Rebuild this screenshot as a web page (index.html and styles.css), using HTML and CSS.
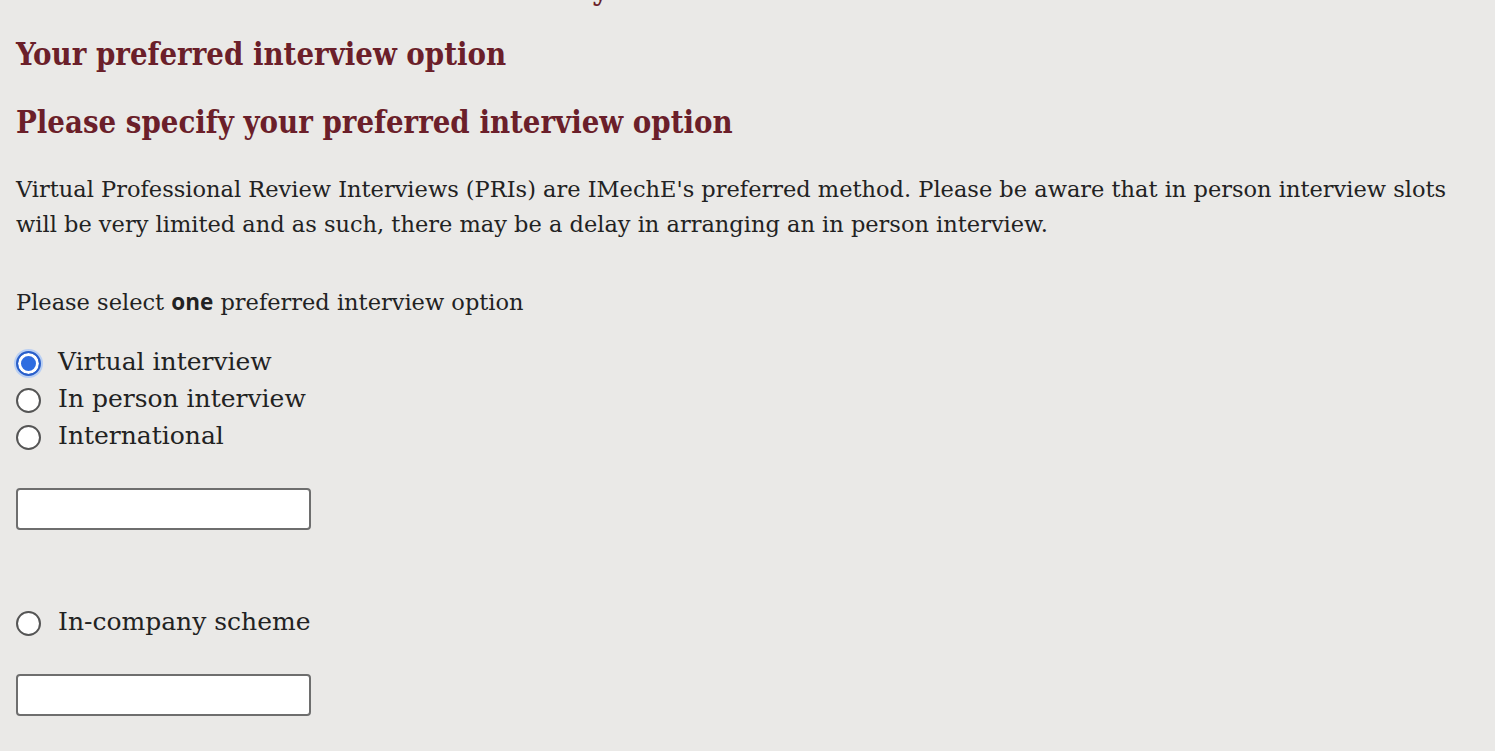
FILE: index.html
```html
<!DOCTYPE html>
<html lang="en">
<head>
  <meta charset="UTF-8" />
  <title>Your preferred interview option</title>
  <link rel="stylesheet" href="styles.css">
</head>
<body>

  <div class="secao">
    <p class="resto">Referees and summary</p>

    <h2 class="titulo">Your preferred interview option</h2>
    <h3 class="subtitulo">Please specify your preferred interview option</h3>

    <p class="texto">Virtual Professional Review Interviews (PRIs) are IMechE's preferred method. Please be aware that in person interview slots will be very limited and as such, there may be a delay in arranging an in person interview.</p>

    <p class="texto pergunta">Please select <strong>one</strong> preferred interview option</p>

    <div class="opcoes">
      <label class="opcao"><input type="radio" name="entrevista" checked /> Virtual interview</label>
      <label class="opcao"><input type="radio" name="entrevista" /> In person interview</label>
      <label class="opcao"><input type="radio" name="entrevista" /> International</label>
    </div>

    <input type="text" class="campo" />

    <div class="opcoes empresa">
      <label class="opcao"><input type="radio" name="entrevista" /> In-company scheme</label>
    </div>

    <input type="text" class="campo" />
  </div>

</body>
</html>
```

FILE: styles.css
```css
body {
  font-family: "DejaVu Serif", serif;
  background-color: #eae9e7;
  color: #222;
  margin: 0;
  padding: 0 16px;
}

.secao {
  display: flex;
  flex-direction: column;
  align-items: flex-start;
}

.resto,
.titulo,
.subtitulo {
  font-family: "DejaVu Serif Condensed", "DejaVu Serif", serif;
  font-size: 30.8px;
  font-weight: bold;
  color: #6b1f2a;
}

.resto {
  margin: -30px 0 0 0;
  height: 30px;
  padding-left: 237px;
}

.titulo,
.subtitulo {
  line-height: 40px;
}

.titulo {
  margin: 34px 0 0 0;
}

.subtitulo {
  margin: 28px 0 0 0;
}

.texto {
  font-size: 22.5px;
  line-height: 35px;
  margin: 30px 0 0 0;
  max-width: 1445px;
}

.texto strong {
  font-family: "Open Sans", sans-serif;
}

.pergunta {
  margin-top: 42px;
}

.opcoes {
  display: flex;
  flex-direction: column;
  margin-top: 23px;
}

.opcao {
  display: flex;
  align-items: center;
  gap: 17px;
  font-size: 25px;
  height: 37px;
}

.opcao input {
  appearance: none;
  width: 25px;
  height: 25px;
  margin: 3px 0 0 0;
  border: 2px solid #555;
  border-radius: 50%;
  background: white;
}

.opcao input:checked {
  border-color: #2a5fc9;
  background: #2f6de0;
  box-shadow: inset 0 0 0 3px white, 0 0 0 2px #b9cff3;
}

.campo {
  width: 295px;
  height: 42px;
  box-sizing: border-box;
  border: 2px solid #6e6e6e;
  border-radius: 4px;
  background: white;
  margin-top: 34px;
}

.empresa {
  margin-top: 73px;
}
```
